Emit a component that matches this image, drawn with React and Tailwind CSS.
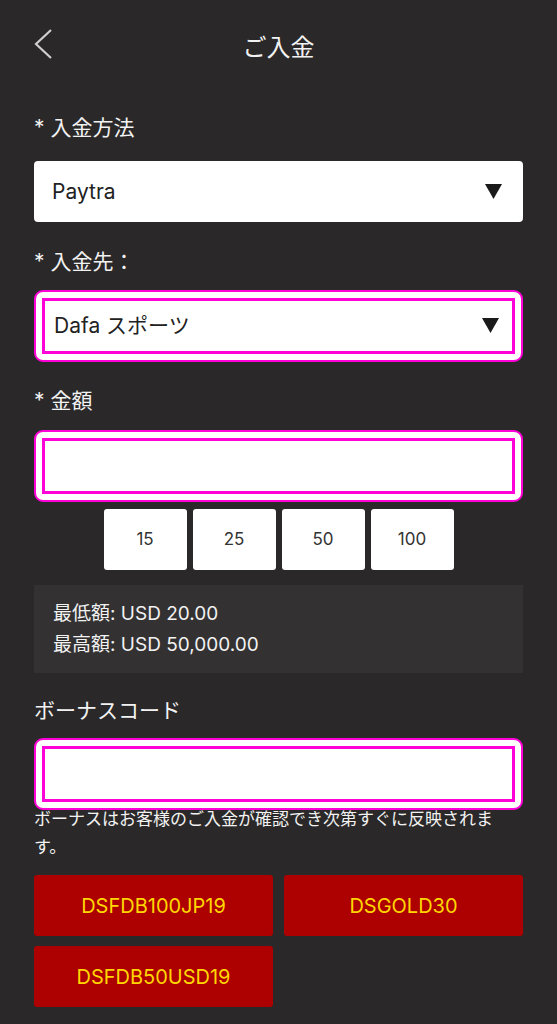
import React from "react";

const font = { fontFamily: 'Inter, "Noto Sans CJK JP", sans-serif' };

function Caret() {
  return (
    <svg width="17" height="16" viewBox="0 0 17 16" className="shrink-0">
      <polygon points="0,0 17,0 8.5,15" fill="#1a1a1a" />
    </svg>
  );
}

function FocusRing({ children }) {
  return (
    <div className="rounded-[9px] border-2 border-[#ff00d8] bg-white p-[6px]">
      <div className="border-[3px] border-[#ff00d8] bg-white h-[56px] flex items-center px-[9px]">
        {children}
      </div>
    </div>
  );
}

export default function App() {
  const amounts = ["15", "25", "50", "100"];
  const codes = ["DSFDB100JP19", "DSGOLD30", "DSFDB50USD19"];

  return (
    <div className="min-h-[1024px] bg-[#2a2829] text-[#f2f2f2]" style={font}>
      {/* Header */}
      <div className="relative h-[96px] flex items-center justify-center">
        <button className="absolute left-[33px] top-[29px]">
          <svg width="20" height="30" viewBox="0 0 20 30">
            <polyline points="18,1 3,15 18,29" fill="none" stroke="#cfcfcf" strokeWidth="2.2" />
          </svg>
        </button>
        <h1 className="text-[24px] leading-none">ご入金</h1>
      </div>

      <div className="px-[34px]">
        {/* 入金方法 */}
        <div className="mt-[18px] text-[21px] leading-[28px]">* 入金方法</div>
        <div className="mt-[19px] h-[61px] rounded-[4px] bg-white flex items-center justify-between pl-[18px] pr-[21px] text-[#222] text-[21px]">
          <span>Paytra</span>
          <Caret />
        </div>

        {/* 入金先 */}
        <div className="mt-[26px] text-[21px] leading-[28px]">* 入金先：</div>
        <div className="mt-[14px]">
          <FocusRing>
            <div className="flex-1 flex items-center justify-between pr-[4px] text-[#222] text-[21px]">
              <span>Dafa スポーツ</span>
              <Caret />
            </div>
          </FocusRing>
        </div>

        {/* 金額 */}
        <div className="mt-[25px] text-[21px] leading-[28px]">* 金額</div>
        <div className="mt-[15px]">
          <FocusRing>
            <span />
          </FocusRing>
        </div>

        <div className="mt-[7px] flex justify-center gap-[6px]">
          {amounts.map((a) => (
            <div
              key={a}
              className="w-[83px] h-[61px] rounded-[3px] bg-white flex items-center justify-center text-[17px] text-[#333]"
            >
              {a}
            </div>
          ))}
        </div>

        {/* limits */}
        <div className="mt-[15px] bg-[#333132] px-[19px] py-[13px] text-[19px] leading-[31px]">
          <div>最低額: USD 20.00</div>
          <div>最高額: USD 50,000.00</div>
        </div>

        {/* ボーナスコード */}
        <div className="mt-[24px] text-[21px] leading-[28px]">ボーナスコード</div>
        <div className="mt-[13px] relative">
          <FocusRing>
            <span />
          </FocusRing>
        </div>
        <p className="-mt-[5px] relative text-[17px] leading-[28px] pr-[20px]">
          ボーナスはお客様のご入金が確認でき次第すぐに反映されます。
        </p>

        <div className="mt-[14px] grid grid-cols-2 gap-x-[11px] gap-y-[10px] pb-[16px]">
          {codes.map((c) => (
            <div
              key={c}
              className="h-[61px] rounded-[3px] bg-[#ad0000] flex items-center justify-center text-[20px] text-[#ffd600]"
            >
              {c}
            </div>
          ))}
        </div>
      </div>
    </div>
  );
}
